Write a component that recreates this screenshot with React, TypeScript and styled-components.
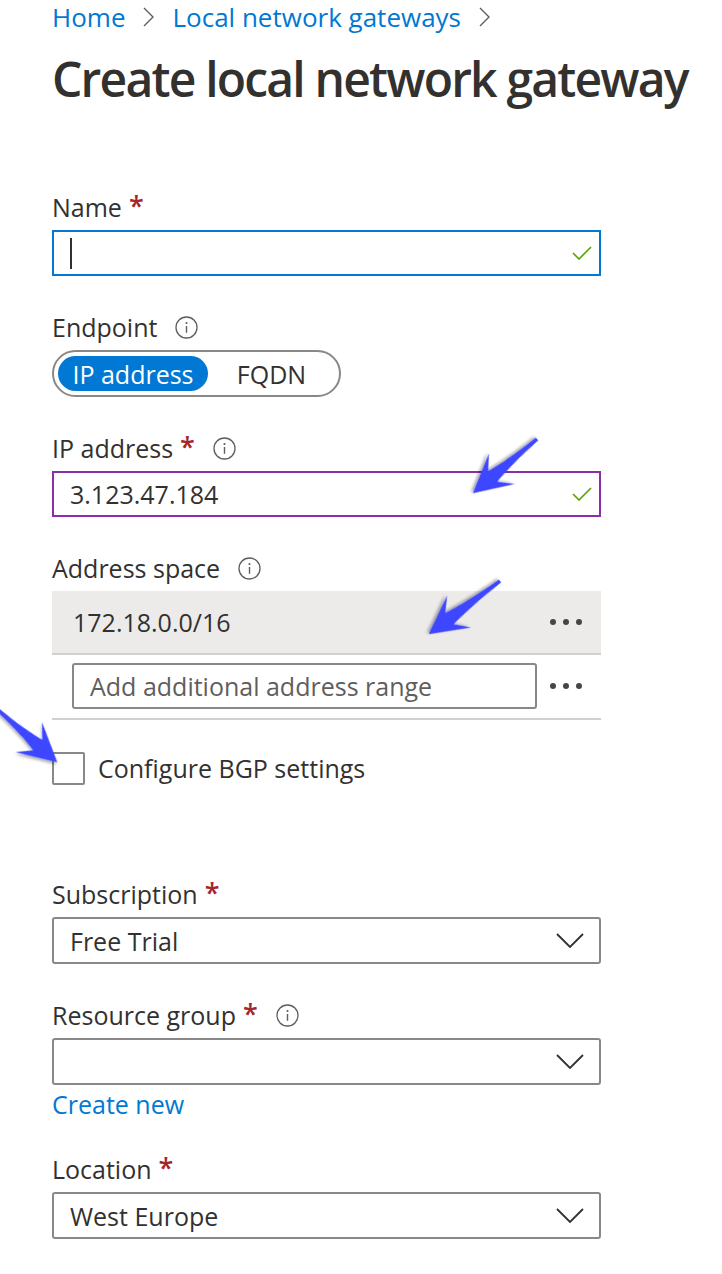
import React from "react";
import styled, { createGlobalStyle } from "styled-components";

const TEXT_COLOR = "#323130";
const BLUE = "#0078d4";
const GRAY_BORDER = "#8a8886";
const RED = "#a4262c";
const SUBTLE = "#605e5c";
const DIVIDER = "#d2d0ce";
const ARROW_BLUE = "#3c46ff";

const GlobalStyle = createGlobalStyle`
  html, body {
    margin: 0;
    padding: 0;
    background: #ffffff;
  }
  body {
    font-family: "Segoe UI", "Open Sans", sans-serif;
    color: ${TEXT_COLOR};
    -webkit-font-smoothing: antialiased;
  }
`;

const Page = styled.div`
  position: relative;
  width: 722px;
  min-height: 1274px;
  padding-left: 52px;
  box-sizing: border-box;
  overflow: hidden;
`;

const Breadcrumb = styled.nav`
  display: flex;
  align-items: center;
  gap: 18px;
  height: 34px;
  font-size: 26px;
  line-height: 34px;
  color: ${BLUE};
`;

const Crumb = styled.span`
  white-space: nowrap;
`;

const Title = styled.h1`
  margin: 15px 0 0;
  font-size: 48px;
  line-height: 60px;
  font-weight: 600;
  letter-spacing: -1.8px;
  white-space: nowrap;
  color: ${TEXT_COLOR};
`;

const Form = styled.div`
  display: flex;
  flex-direction: column;
  gap: 33px;
  width: 549px;
  margin-top: 80px;
`;

const Field = styled.div`
  display: flex;
  flex-direction: column;
  gap: 5px;
`;

const Label = styled.div`
  display: flex;
  align-items: center;
  height: 36px;
  font-size: 25px;
  white-space: nowrap;
`;

const Star = styled.span`
  color: ${RED};
  margin-left: 7px;
  font-size: 27px;
  font-weight: 600;
  position: relative;
  top: -2px;
`;

const InfoWrap = styled.span`
  display: inline-flex;
  margin-left: 18px;
`;

const TextBox = styled.div<{ $border: string }>`
  display: flex;
  align-items: center;
  justify-content: space-between;
  height: 46px;
  box-sizing: border-box;
  border: 2px solid ${(p) => p.$border};
  padding: 0 7px 0 16px;
  font-size: 25px;
`;

const Caret = styled.span`
  width: 2px;
  height: 31px;
  background: ${TEXT_COLOR};
`;

const Select = styled.div`
  display: flex;
  align-items: center;
  justify-content: space-between;
  height: 47px;
  box-sizing: border-box;
  border: 2px solid ${GRAY_BORDER};
  border-radius: 3px;
  padding: 0 15px 0 16px;
  font-size: 25px;
`;

const Toggle = styled.div`
  display: flex;
  width: 289px;
  height: 47px;
  box-sizing: border-box;
  border: 2px solid ${GRAY_BORDER};
  border-radius: 24px;
  padding: 4px;
`;

const ToggleOption = styled.div<{ $active?: boolean }>`
  display: flex;
  align-items: center;
  justify-content: center;
  width: ${(p) => (p.$active ? "150px" : "auto")};
  flex: ${(p) => (p.$active ? "none" : "1")};
  border-radius: 18px;
  font-size: 25px;
  background: ${(p) => (p.$active ? BLUE : "transparent")};
  color: ${(p) => (p.$active ? "#ffffff" : TEXT_COLOR)};
`;

const AddressRow = styled.div`
  display: flex;
  align-items: center;
  justify-content: space-between;
  height: 64px;
  box-sizing: border-box;
  padding: 0 19px 0 21px;
  background: #edebe9;
  border-bottom: 2px solid ${DIVIDER};
  font-size: 25px;
`;

const AddRow = styled.div`
  display: flex;
  align-items: center;
  gap: 13px;
  padding: 8px 19px 9px 20px;
  border-bottom: 2px solid ${DIVIDER};
`;

const AddInput = styled.div`
  flex: 1;
  display: flex;
  align-items: center;
  height: 46px;
  box-sizing: border-box;
  border: 2px solid ${GRAY_BORDER};
  border-radius: 3px;
  padding-left: 16px;
  font-size: 25px;
  color: ${SUBTLE};
  white-space: nowrap;
`;

const Dots = styled.div`
  display: flex;
  gap: 7px;
`;

const Dot = styled.span`
  width: 6px;
  height: 6px;
  border-radius: 50%;
  background: #484644;
`;

const CheckboxRow = styled.div`
  display: flex;
  align-items: center;
  gap: 13px;
  margin-top: -2px;
  margin-bottom: 58px;
  font-size: 25px;
`;

const Box = styled.span`
  width: 33px;
  height: 33px;
  box-sizing: border-box;
  border: 2px solid ${GRAY_BORDER};
  border-radius: 2px;
`;

const Link = styled.div`
  font-size: 25px;
  line-height: 28px;
  color: ${BLUE};
`;

const Overlay = styled.svg`
  position: absolute;
  top: 0;
  left: 0;
  pointer-events: none;
`;

const Chevron = () => (
  <svg width="11" height="20" viewBox="0 0 11 20">
    <polyline points="1,1 10,10 1,19" fill="none" stroke={SUBTLE} strokeWidth="1.4" />
  </svg>
);

const Info = () => (
  <InfoWrap>
    <svg width="23" height="23" viewBox="0 0 23 23">
      <circle cx="11.5" cy="11.5" r="10.5" fill="none" stroke={SUBTLE} strokeWidth="1.3" />
      <circle cx="11.5" cy="7" r="1.1" fill={SUBTLE} />
      <line x1="11.5" y1="10" x2="11.5" y2="16.8" stroke={SUBTLE} strokeWidth="1.4" />
    </svg>
  </InfoWrap>
);

const Check = () => (
  <svg width="20" height="14" viewBox="0 0 20 14">
    <polyline points="1,7 7,13 19,1" fill="none" stroke="#57a300" strokeWidth="1.6" />
  </svg>
);

const DownChevron = () => (
  <svg width="28" height="15" viewBox="0 0 28 15">
    <polyline points="1,1 14,14 27,1" fill="none" stroke={TEXT_COLOR} strokeWidth="1.8" />
  </svg>
);

const More = () => (
  <Dots>
    <Dot />
    <Dot />
    <Dot />
  </Dots>
);

const arrowPath = (L: number) =>
  `M0,-1.8 Q${L * 0.45},-3 ${L - 26},-7 L${L - 38},-20 L${L},0 L${L - 38},20 L${L - 26},7 Q${L * 0.45},3 0,1.8 Z`;

// callout arrows drawn over the form
const arrows = [
  { x: 537, y: 439, angle: 139.8, len: 84 },
  { x: 500, y: 581, angle: 143.3, len: 89 },
  { x: -2, y: 710, angle: 41.4, len: 79 },
];

const Label2 = ({
  text,
  required,
  info,
}: {
  text: string;
  required?: boolean;
  info?: boolean;
}) => (
  <Label>
    {text}
    {required && <Star>*</Star>}
    {info && <Info />}
  </Label>
);

export default function App() {
  return (
    <Page>
      <GlobalStyle />
      <Breadcrumb>
        <Crumb>Home</Crumb>
        <Chevron />
        <Crumb>Local network gateways</Crumb>
        <Chevron />
      </Breadcrumb>
      <Title>Create local network gateway</Title>

      <Form>
        <Field>
          <Label2 text="Name" required />
          <TextBox $border={BLUE}>
            <Caret />
            <Check />
          </TextBox>
        </Field>

        <Field>
          <Label2 text="Endpoint" info />
          <Toggle>
            <ToggleOption $active>IP address</ToggleOption>
            <ToggleOption>FQDN</ToggleOption>
          </Toggle>
        </Field>

        <Field>
          <Label2 text="IP address" required info />
          <TextBox $border="#8b2fa8">
            <span>3.123.47.184</span>
            <Check />
          </TextBox>
        </Field>

        <Field>
          <Label2 text="Address space" info />
          <div>
            <AddressRow>
              <span>172.18.0.0/16</span>
              <More />
            </AddressRow>
            <AddRow>
              <AddInput>Add additional address range</AddInput>
              <More />
            </AddRow>
          </div>
        </Field>

        <CheckboxRow>
          <Box />
          <span>Configure BGP settings</span>
        </CheckboxRow>

        <Field>
          <Label2 text="Subscription" required />
          <Select>
            <span>Free Trial</span>
            <DownChevron />
          </Select>
        </Field>

        <Field>
          <Label2 text="Resource group" required info />
          <Select>
            <span />
            <DownChevron />
          </Select>
          <Link>Create new</Link>
        </Field>

        <Field>
          <Label2 text="Location" required />
          <Select>
            <span>West Europe</span>
            <DownChevron />
          </Select>
        </Field>
      </Form>

      <Overlay width="722" height="1274" viewBox="0 0 722 1274">
        <defs>
          <filter id="arrowShadow" x="-20%" y="-50%" width="140%" height="200%">
            <feDropShadow dx="1" dy="2" stdDeviation="1.5" floodColor="#000" floodOpacity="0.35" />
          </filter>
        </defs>
        {arrows.map((a, i) => (
          <path
            key={i}
            d={arrowPath(a.len)}
            fill={ARROW_BLUE}
            filter="url(#arrowShadow)"
            transform={`translate(${a.x} ${a.y}) rotate(${a.angle})`}
          />
        ))}
      </Overlay>
    </Page>
  );
}
